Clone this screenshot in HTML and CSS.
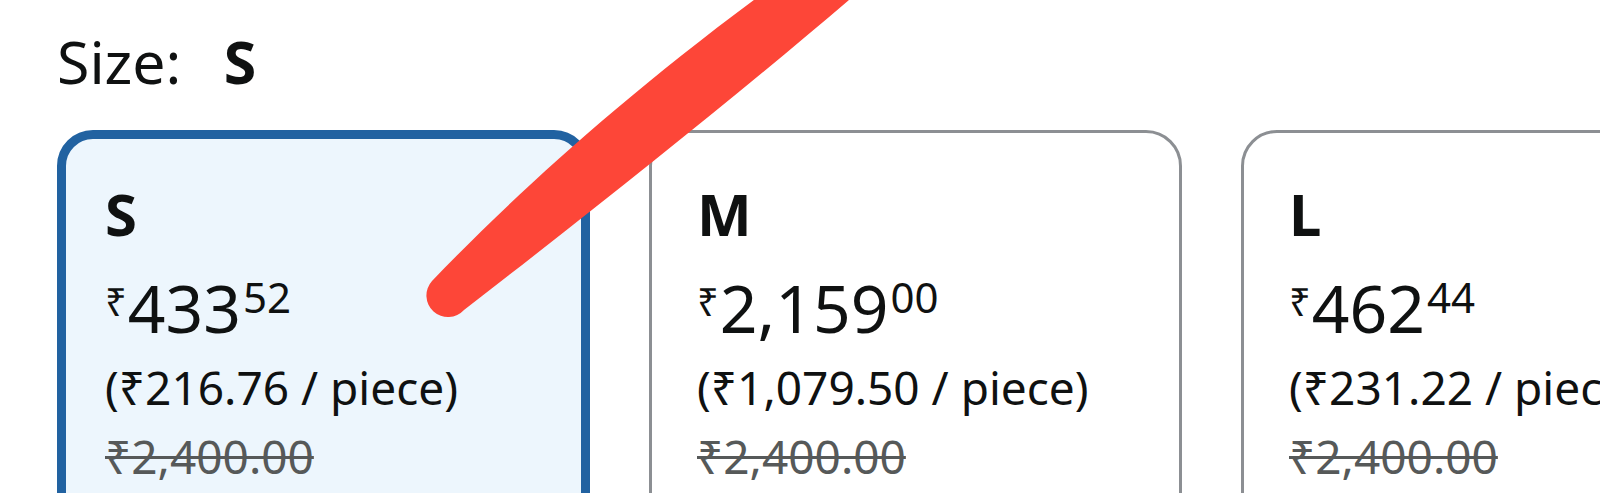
FILE: index.html
```html
<!DOCTYPE html>
<html lang="en">
<head>
<meta charset="utf-8">
<title>Size selector</title>
<link rel="stylesheet" href="styles.css">
</head>
<body>
<div class="page">
  <div class="size-heading">
    <span class="size-label">Size:</span>
    <span class="size-value">S</span>
  </div>
  <div class="swatches">
    <div class="swatch selected">
      <div class="swatch-name">S</div>
      <div class="price"><span class="cur">₹</span><span class="whole">433</span><span class="frac">52</span></div>
      <div class="unit">(₹216.76 / piece)</div>
      <div class="mrp">₹2,400.00</div>
    </div>
    <div class="swatch">
      <div class="swatch-name">M</div>
      <div class="price"><span class="cur">₹</span><span class="whole">2,159</span><span class="frac">00</span></div>
      <div class="unit">(₹1,079.50 / piece)</div>
      <div class="mrp">₹2,400.00</div>
    </div>
    <div class="swatch">
      <div class="swatch-name">L</div>
      <div class="price"><span class="cur">₹</span><span class="whole">462</span><span class="frac">44</span></div>
      <div class="unit">(₹231.22 / piece)</div>
      <div class="mrp">₹2,400.00</div>
    </div>
  </div>
  <svg class="scribble" viewBox="0 0 1600 493" width="1600" height="493" aria-hidden="true">
    <path d="M 432 281 C 500 210, 610 106, 762 -6 L 856 -6 C 744 90, 614 194, 464 310 A 21 21 0 0 1 432 281 Z" fill="#fd4638"/>
  </svg>
</div>
</body>
</html>
```
FILE: styles.css
```css
html, body {
  margin: 0;
  padding: 0;
  background: #ffffff;
}
body {
  width: 1600px;
  height: 493px;
  overflow: hidden;
  font-family: "Noto Sans", "DejaVu Sans", sans-serif;
  color: #0f1111;
}
.page {
  position: relative;
  width: 1600px;
  height: 493px;
  padding: 21px 0 0 57px;
  box-sizing: border-box;
  overflow: hidden;
}
.size-heading {
  font-size: 59px;
  line-height: 80px;
  height: 80px;
  white-space: nowrap;
}
.size-value {
  font-weight: 700;
  margin-left: 27px;
}
.swatches {
  display: flex;
  gap: 59px;
  margin-top: 29px;
}
.swatch {
  flex: none;
  width: 533px;
  height: 440px;
  box-sizing: border-box;
  border: 3px solid #8c8f93;
  border-radius: 36px;
  padding: 46px 0 0 45px;
  background: #ffffff;
  white-space: nowrap;
}
.swatch.selected {
  border: 9px solid #2162a1;
  background: #edf6fd;
  padding: 40px 0 0 39px;
}
.swatch-name {
  font-size: 58px;
  font-weight: 700;
  line-height: 70px;
  height: 70px;
}
.price {
  margin-top: 18px;
  font-size: 66px;
  line-height: 80px;
  height: 80px;
}
.price .cur {
  font-size: 38px;
  line-height: 68px;
  vertical-align: top;
  margin-right: 1px;
}
.price .frac {
  font-size: 42px;
  line-height: 60px;
  vertical-align: top;
  margin-left: 2px;
}
.unit {
  margin-top: 10px;
  font-size: 46px;
  line-height: 60px;
  height: 60px;
}
.mrp {
  margin-top: 9px;
  font-size: 46px;
  line-height: 60px;
  color: #565959;
  text-decoration: line-through;
  text-decoration-thickness: 3px;
}
.scribble {
  position: absolute;
  left: 0;
  top: 0;
  pointer-events: none;
}
```
